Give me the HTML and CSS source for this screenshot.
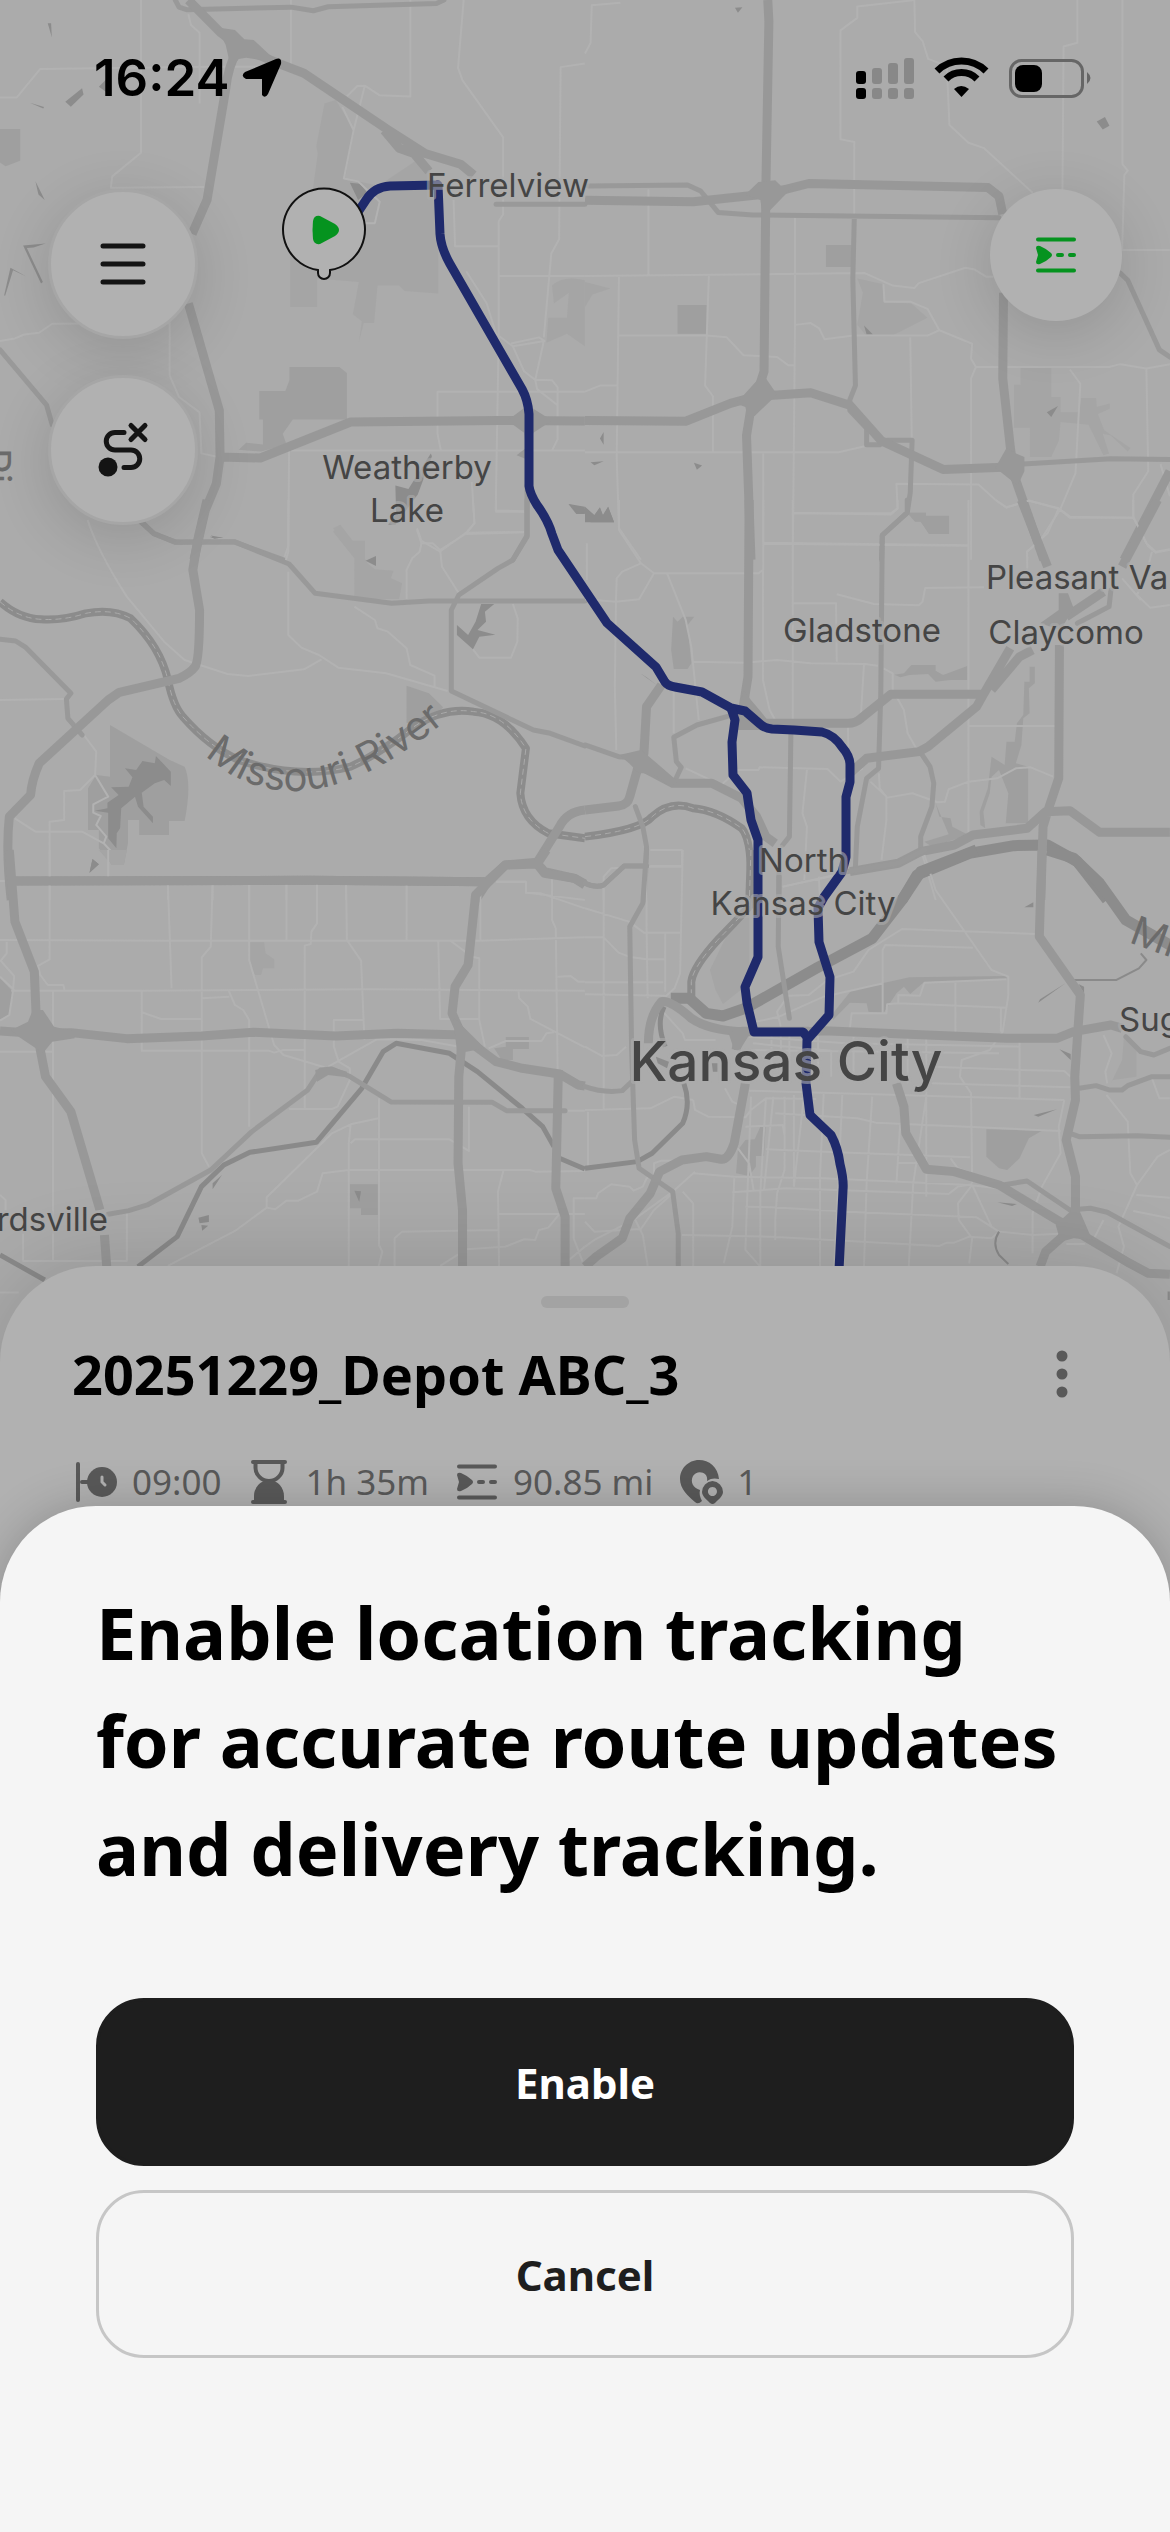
FILE: index.html
```html
<!DOCTYPE html>
<html lang="en">
<head>
<meta charset="utf-8">
<meta name="viewport" content="width=device-width, initial-scale=1">
<title>Route overview</title>
<link rel="stylesheet" href="styles.css">
</head>
<body>
<svg class="defs" aria-hidden="true">
  <symbol id="icon-road" viewBox="0 0 48 48">
    <path d="M6 8.500H42M6 39.500H42M26 24H30M38 24H42" fill="none" stroke="currentColor" stroke-width="4" stroke-linecap="round"/>
    <path d="M4 17Q4 14 8 15Q15 18 19 22Q21 24 19 26Q15 30 8 33Q4 34 4 31L6 24Z" fill="currentColor"/>
  </symbol>
</svg>
<main class="screen">
  <section class="map-area">
    <svg class="map" viewBox="0 0 1170 1380" role="img" aria-label="Route map of Kansas City">
      <!-- north-west -->
      <g class="tile" transform="scale(.373 .357)">
        <path class="park" d="M0 361H54V450L15 466L0 455ZM695 1095H765L776 1065V1028H910L930 1045V1175H785L758 1215L768 1245L700 1265L640 1260L660 1240L705 1245V1175H695Z"/>
        <path class="field" d="M870 290L900 280L950 365L925 500L1015 520L1130 440L1175 520V822L1085 815L1070 800H1012L1003 905H975L962 960L970 900L946 880L962 790L850 780V860H778V700L835 560L852 430L848 410ZM1480 800Q1510 770 1568 785V970L1520 935L1465 960L1470 890H1520L1525 820L1485 850ZM893 1480L912 1470L945 1515H978V1568H955Z"/>
        <path class="lake" d="M128 65H137L139 105ZM175 285L220 247L224 265L190 299ZM80 288L118 300L116 304ZM265 243L285 222V258ZM95 508L120 560L103 545ZM62 688L122 682L90 693L72 695L115 790L110 794ZM28 750L72 775L35 757L14 828H11ZM938 512L965 515L985 540L960 560ZM1060 1360L1095 1370L1155 1270L1158 1278L1120 1385L1060 1470H1040L1062 1440ZM1524 1412L1568 1425V1440H1545ZM565 1500L598 1506L575 1508Z"/>
        <path class="street" d="M378 0V428L301 494L297 526L548 524M0 273H45L108 193L560 187H780V0M505 40L512 70L535 92V290M1100 0V270L1018 267L978 240L958 241L930 270M978 240L948 365L922 500L960 508L1018 565L1005 625H975M918 300L948 365M1243 0L1228 190L1240 225L1349 385V600L1337 620V940L1329 1430L1405 1432M1568 178L1503 188L1499 670L1478 710L1458 945M1216 560L1220 690H1337M1337 773H1568M1250 760L1305 850L1330 935L1375 970L1460 955L1445 945L1370 962M1375 970L1405 1040L1435 1064L1480 1065L1495 1085V1230L1480 1262M1435 1064L1440 1090L1495 1135M1458 955L1435 1064M1568 1097H1173V1215L1182 1262M780 1262H1568M775 1262L773 1530L760 1568M0 955L40 948L65 937L105 932L140 907L455 905V1052L480 1112L535 1155L540 1270L585 1280M1265 1350L1272 1465L1250 1492L1180 1545L1130 1515L1118 1480M1250 1492L1405 1490"/>
        <path class="road" d="M470 0L480 20L500 27L780 20L840 30L880 19L1170 10L1190 0M0 980L125 1135L140 1190M380 1465L412 1495L470 1518H628L760 1568M1413 1360V1500L1375 1568"/>
        <path class="highway" d="M505 0L590 90L640 130L740 175L815 205L1035 360L1140 430L1235 460L1270 490M640 130Q610 190 605 250L555 560L515 655M505 850L588 1150L590 1280L580 1355L550 1430L520 1568M588 1280L698 1283L940 1182L1340 1178L1568 1179M1030 365L1070 415L1110 430L1150 480"/>
        <path class="interchange" d="M580 76L630 84L655 110L680 112L745 175L660 162L640 165L620 195L605 125ZM1360 1178L1415 1135L1480 1178L1430 1212L1420 1260V1290L1385 1275L1410 1255L1405 1212Z"/>
        <path class="road" d="M1330 572H1568"/>
      </g>

      <!-- north-east -->
      <g class="tile" transform="translate(585) scale(.373 .357)">
        <path class="park" d="M646 686H714V748H646ZM248 854H326V935H248ZM864 1436H914V1445H976V1495H922L900 1460H885Z"/>
        <path class="field" d="M730 780L800 796V845L875 850L918 890L820 942H755L730 910L745 820ZM1168 1030H1250V1112H1275V1155H1325L1330 1115H1370L1372 1140L1407 1130V1145L1375 1160L1392 1205L1462 1255L1455 1265L1410 1220L1388 1215L1405 1270L1390 1275L1350 1190L1275 1182L1270 1235L1250 1280H1193V1198H1150V1078H1168ZM0 790L68 808L20 825L0 860Z"/>
        <path class="lake" d="M402 22L422 20L410 36ZM1372 340L1394 328L1406 352L1388 363ZM748 912L772 937H755ZM1238 1155L1268 1137L1250 1168ZM40 1228L50 1210V1246ZM15 1295L50 1292L25 1303ZM292 1296L314 1304L300 1316ZM0 1422L25 1445L40 1422L48 1445L62 1420L78 1463H15L0 1448Z"/>
        <path class="street" d="M0 150L15 120L18 15L95 8M885 0L730 18V50L685 85V390L722 398V600M883 0L885 90L905 115L920 165L970 185L977 350L1028 400L1070 415L1200 540M1320 0V120L1283 130L1280 540M1441 0V460L1455 478L1446 490L1440 700H1568M170 530V770M0 773L750 765L825 800L883 807L895 793L1020 750L1045 755L1075 775H1095M563 610V910L557 1568M563 910L605 905L628 920L642 950L720 940H918L950 925L1038 963L1035 1005L1048 1028M800 796L803 845H872L918 865L950 925M91 773L85 1280L91 1480L150 1568M91 940H326L380 945L425 995L515 1000L545 1023H560M332 773L322 1080L343 1110V1268M0 1097L40 1080H85M0 1267H680L750 1250M872 945L876 1230M1568 1020L1505 1032L1435 1020L1405 1028H1048L1035 1060V1568M1300 1035L1328 1075L1315 1325L1275 1425L1220 1515L1185 1545L1186 1568M1505 1032L1510 1320L1470 1385V1450H1300L1270 1425L1190 1402L1130 1422L1100 1400L1055 1357L835 1355L838 1425L820 1441L560 1437M478 1270V1520L1030 1527M1543 1300L1568 1390M1470 1450L1510 1530L1530 1548L1568 1540"/>
        <path class="road" d="M8 521L275 518L310 535L357 595L450 602L1110 610M722 610L718 780L725 1080L710 1120L710 1150L755 1200V1246H790L810 1233H877L872 1380L864 1436L797 1500L795 1568M1435 765L1455 785L1540 980L1568 1000M1175 1300L1410 1285L1568 1287"/>
        <path class="highway" d="M490 0L493 60L485 520L480 1040L465 1090M0 561L290 565L490 543L600 514L1080 525L1110 550L1120 600M1122 820L1120 1060L1140 1250L1150 1330L1230 1568M0 1178L270 1180L390 1130L460 1110L605 1100L710 1135L795 1235L960 1315L1140 1308M450 1110L433 1220L445 1568M1568 1320L1445 1568"/>
        <path class="interchange" d="M465 510L510 505L525 520H560L495 590H475L470 560L430 545ZM470 1055H482L515 1105L455 1165H435L430 1140L405 1130ZM1130 1255L1155 1270L1178 1280V1320L1160 1360L1100 1310Z"/>
      </g>

      <!-- middle west -->
      <g class="tile" transform="translate(0 500) scale(.373 .3333)">
        <path class="park" d="M295 675L455 780L495 800Q515 850 495 963H453V1005H373V960H343V1030L332 1095H300L265 1045V990H236V865L258 825L295 830ZM1090 557L1150 580L1188 622L1160 655L1090 670Z"/>
        <path class="field" d="M893 95L912 75L945 123H978V175L985 190L1005 208L1055 212L1048 235L1078 250L1070 297H950V175Z"/>
        <path class="lake" d="M418 768L458 815V858L440 840L415 850L380 878L385 920L410 950V970L370 920L362 890L325 925L322 985L313 1000L312 1045L290 1015V938L254 932L288 925V908L318 885L298 862L345 860L355 832L335 805L365 810L382 783L415 790ZM248 1077L265 1093L240 1118ZM1290 312H1325L1300 335L1303 365L1280 390L1328 404L1285 410L1268 448L1225 405V375L1255 405L1275 365ZM1525 12L1568 20V40L1545 35ZM562 110L598 112L575 116ZM980 182L1008 168V198Z"/>
        <path class="street" d="M235 60Q260 150 340 290L440 425L495 480L610 522L665 528L815 508L862 478M773 0V155L765 185M773 215V405L808 443L855 465L907 503L1035 520L1200 573M0 600L175 597M225 705L258 755L255 825L290 890L250 913V938L270 948L258 975L285 1010L278 1030L220 995H95L40 955M255 825L215 870L172 873V960L133 965V1200M278 1030L303 1060L290 1090V1130M1268 0L1272 70L1250 100L1180 150L1160 130H1130L1118 90M1250 102L1405 97M1130 130L1125 155L1105 175L1090 210V297M1180 150L1185 200L1230 280M1330 0V35H1405M1375 312L1388 355L1387 425L1370 473H1285L1268 448M950 320L1005 360L1012 385L1040 395L1090 445L1100 495L1165 527V560M450 1145V1200M570 1145V1200M668 1145V1200M768 1145V1200M850 1145V1200M928 1145V1200M1090 1145V1200M1330 1145H1410V1178L1568 1200M1480 1130V1200M0 1143H30"/>
        <path class="river" d="M0 305Q50 355 110 358Q170 362 230 340Q300 325 350 355Q430 440 450 540Q465 620 490 650Q560 740 640 780Q800 840 940 800Q1020 760 1110 680Q1190 620 1270 635Q1350 640 1410 745L1395 880Q1400 960 1470 1000L1568 1015"/>
        <path class="channel" d="M0 305Q50 355 110 358Q170 362 230 340Q300 325 350 355Q430 440 450 540Q465 620 490 650Q560 740 640 780Q800 840 940 800Q1020 760 1110 680Q1190 620 1270 635Q1350 640 1410 745L1395 880Q1400 960 1470 1000L1568 1015"/>
        <path class="road" d="M380 65L412 100L470 127L628 125L775 192L845 280L1050 310L1150 303H1568M1413 0V110L1375 180L1335 205L1230 285L1210 330V573L1430 690L1475 700L1568 738M0 418L42 423L70 443L190 580L178 597L182 655L220 705"/>
        <path class="highway" d="M555 0L530 120L517 210L535 330Q535 480 523 500Q510 520 480 535L320 577L290 600L105 790Q85 840 82 885L25 950Q15 1050 30 1200M30 1143L830 1141L1300 1145M1275 1200L1310 1140L1355 1095L1440 1087L1500 980Q1520 935 1568 930M1440 1090L1460 1115L1540 1135L1568 1152"/>
      </g>

      <!-- middle east -->
      <g class="tile" transform="translate(585 500) scale(.373 .3333)">
        <path class="park" d="M236 350L248 365L262 350H293L275 375L285 490L275 507H238L231 450ZM864 38H914V48H976V101H922L900 65H885ZM830 524L855 520L875 495H940V512L960 525L1025 498V540H980L940 545L920 522L870 525L845 532ZM1192 500H1206V550L1190 565L1192 640L1175 655L1170 735L1155 790L1188 800V970H1128L1135 880L1110 810L1090 830L1085 880L1068 935L1073 985L1060 975L1058 935L1080 865L1090 770L1125 795L1130 725H1152L1158 670L1175 645L1178 545H1192ZM940 910L950 950L980 955L985 980L1028 1005L930 1040L910 1025L975 1003Z"/>
        <path class="lake" d="M0 20L25 45L40 22L48 45L62 20L78 67H0ZM148 520L165 532L192 555Z"/>
        <path class="street" d="M91 0V90L150 190L185 220H465L477 210V540L495 630L510 660M478 0V210M557 0V660M557 40H820L838 25V0M478 131L1028 137V0M1028 137V1000M150 190L100 215L85 235L83 303M0 298L83 305L145 298L185 220M83 303L80 560L84 750M220 220L270 360L285 440L305 660M238 560V700M290 485L430 488L515 480L605 490L750 492L785 497M557 310H673L675 485M675 283L775 312L895 316L905 305L912 264L1070 262M748 492L740 640M800 505L825 520V570L855 630L865 700L888 745M1030 678H1260M705 680L706 745M270 805L365 855L410 810H465L468 802L650 807L685 845L745 805M595 810L583 940L595 980L588 1140M765 845L808 890V960L795 1080M788 820L790 865L810 893L878 880L945 907L965 905L975 868L1028 845L1105 835L1155 805L1195 802L1255 830M1100 0L1130 22L1190 2L1270 25L1300 50L1470 53V0M1270 25L1240 100L1185 155L1186 220M1470 50L1505 130L1530 155L1568 148M1520 155L1505 220L1480 285L1515 323L1568 315M1440 235L1490 300M5 130V240M50 1200V1130L70 1105L165 1100H260V1050H175M530 1160L700 1120M627 1130L630 1200M905 1065L940 1200"/>
        <path class="river" d="M0 1010Q150 990 180 950Q230 900 290 925Q350 930 420 985Q450 1020 445 1200"/>
        <path class="channel" d="M0 1010Q150 990 180 950Q230 900 290 925Q350 930 420 985Q450 1020 445 1200"/>
        <path class="river wide" d="M850 1200L890 1125L1030 1060L1150 1037L1240 1035L1320 1085L1400 1200"/>
        <path class="road" d="M864 0V38L797 105L793 580L787 805L755 835L730 980L725 1100M0 735L90 770L150 775M380 650L300 675L238 712L245 785L258 802L238 850M552 700L548 1010L530 1035M1410 270L1405 320L1320 370M520 1120V1200M135 920L155 980L165 1040L160 1200M165 1098H105L50 1155Q30 1165 0 1150M895 750L925 800L935 850L930 920L900 1010V1050"/>
        <path class="highway" d="M440 0L437 530L420 650M1170 0L1240 200M1535 0L1440 200M1390 275L1290 350M1140 445L1070 580L1050 620L920 740L895 755L755 775L710 820M1200 450L1165 470L1090 570M1065 583H820L740 655Q725 670 705 670H420M1272 435L1270 835L1240 935L1228 980L1222 1200M1568 997H1380L1300 932L1235 935L1185 985L1040 1005L990 1035L900 1055L840 1090L710 1115M205 555L165 620L158 760L140 810L120 890Q115 915 90 918L0 930M150 800L235 850H340L420 895L460 950L485 1010L510 1030"/>
        <path class="interchange" d="M1270 280H1295L1310 325L1275 390L1220 370L1270 330ZM92 765L150 750L172 770L250 845L230 860L180 820H145L118 790ZM425 570L445 600L475 640L510 690H410V640Z"/>
      </g>

      <!-- south-west -->
      <g class="tile" transform="translate(0 850) scale(.373 .3333)">
        <path class="park" d="M938 1003H1013V1095H968V1075H938ZM1356 561H1418V597H1375V630H1345L1325 595L1356 590ZM0 385L35 425L25 495L0 508Z"/>
        <path class="field" d="M670 277H708L712 310L735 328V355H705L700 375H684L670 345ZM265 0H340L332 45H300Z"/>
        <path class="lake" d="M248 27L265 43L240 68ZM950 1022L968 1024L963 1055ZM532 1103L560 1095V1116L535 1120ZM540 1125L558 1127L542 1142ZM595 975L570 1018V1000Z"/>
        <path class="street" d="M133 0V328L102 348L108 375L128 405H170L173 420M290 0V82M0 270L450 272H1285L1568 262M450 100L460 415M570 100L565 290L541 322V910L560 950M668 100V330L690 415L735 585L760 615L870 652M768 100V270M850 100V220L835 245L833 282L817 287V775M928 100L930 270L968 332L977 570M1090 100V270M1288 130V270M30 422H380L1000 418L1568 422M0 330L38 378L35 422L25 495L0 512M0 380L38 420M18 275V310L0 335M142 425V1230M380 425V602H720L735 608L760 600H815M380 487L432 507H540M541 445L615 440M613 422L630 465L652 480L668 510V830M975 510H895V590L908 635L938 655V690L905 770L890 777H775M880 650L1010 568L1130 570L1280 600M1175 275L1180 507H1285V325L1265 320L1205 270M1285 510L1300 590M1390 422L1392 445L1415 470L1422 507L1568 592M1485 547L1465 550L1452 573H1356L1310 595M1480 80V210L1490 235L1495 660M1495 380L1530 378L1550 395H1568M0 605H142M1330 95H1410V128L1450 130L1568 175M1015 805L940 823L890 850L715 1042V1073L630 1143L450 1248M715 1073L738 1078L768 1052H800L850 1025L865 970L935 960H1420L1435 965L1568 963M935 1250V880L940 823M1016 745V1185L1025 1205L1015 1248M940 880L952 868H1205L1257 903V770M1350 960L1335 1025L1338 1248M1336 1092H1568M1058 1248V1165L1078 1145L1336 1140M1180 1248L1250 1198L1355 1190L1405 1168L1435 1170L1445 1140L1470 1133L1500 1092M1568 1045H1538V1165L1562 1235M1515 1240L1568 1190M1520 782H1568M62 1150V1233H340V1090M0 1035L15 1050V1080M0 1328H50"/>
        <path class="water-line" d="M370 1250L475 1160L540 1010L600 945L670 907L848 877L970 715L1027 605L1062 580L1205 610L1280 665L1400 775L1455 830L1485 890M1500 925L1568 957M0 1215L120 1290"/>
        <path class="road" d="M290 1093L345 1082L395 1065L565 960L675 845L825 720L860 660L890 657L935 678L1048 756L1320 757L1358 782H1515"/>
        <path class="highway" d="M25 0L40 215L92 365L97 500L108 600L122 680L190 785L268 1080M280 1155L286 1250M0 543L90 550L190 548L340 566L540 558L680 547L900 558L1065 550L1240 555M30 93L830 91L1300 95M1465 0L1440 42L1355 45L1275 135L1255 345L1220 410L1212 490L1240 560L1230 680L1228 940L1240 1080V1250M1240 560L1330 635L1400 655L1500 672L1550 705L1568 708M1497 660L1490 1015L1515 1100V1250M1440 42L1460 70L1540 85L1568 105"/>
        <path class="interchange" d="M88 480H115L145 530L200 545V565L140 575L115 610L90 590L50 560L30 540L75 515ZM1215 500L1300 595L1250 605H1225ZM845 660L885 650L930 665V682L880 675L850 695Z"/>
      </g>

      <!-- south-east -->
      <g class="tile" transform="translate(585 850) scale(.373 .3333)">
        <path class="park" d="M665 490L715 420L870 382L1130 378V388L935 395L905 400L872 432L855 410L835 430L800 490L760 485L755 460L710 458L665 510ZM1076 838L1225 842L1190 865L1165 925L1132 960L1110 955L1076 920ZM470 830H484L480 918H458V950L440 978L405 970L410 900L430 870L455 868Z"/>
        <path class="field" d="M440 190V400L370 462L350 420L335 360L400 210ZM1445 560L1478 600V680L1415 690L1410 700L1440 630Z"/>
        <path class="lake" d="M1178 172L1202 157V172ZM1288 400L1215 458L1220 448ZM1323 402L1338 410V430ZM1272 598L1302 612V630ZM1203 795L1265 778L1215 800ZM1105 1057L1158 1062L1145 1068ZM1562 1325H1568V1350H1562ZM340 640H355V665H343ZM190 620L225 635L220 655L195 640Z"/>
        <path class="street" d="M50 115V780M165 0V230L168 445M0 175L118 215L158 248H255M262 0L255 370L240 415L215 440M215 250V425M0 262H50L90 308L118 320L165 328H215M0 397H210M0 433L215 437M0 780L175 775L240 740L290 750M8 785V955M0 590L45 618L85 615L110 590M175 48H262M910 15L940 120L1090 360L1135 380V435L1120 545L1085 600L1010 630L1005 680L1035 730L1038 1000M530 110L690 70M1210 252L850 237L760 300L720 365L650 390L600 435L545 437L515 485L525 530M1040 293L805 285L798 300V490M1130 388L910 398L898 437L840 435V460L810 463L808 490H715L710 535M840 460L1130 473M993 398V550M1115 475V545M440 520L520 500L640 440L800 400M435 540L800 545M440 560L700 580L1165 590M450 580L660 602M445 600L1110 610M500 540V650M525 540V655M548 540V660M625 540V660M660 600V680M865 560V700M915 560V1040M1165 575V745M720 560V690M930 650L1170 660L1285 663L1302 680M930 700L1302 712M440 722L1285 750M510 790L730 805L780 818L1275 843M485 898L640 905L1032 922M400 980L640 985L1030 1005L1150 1020M395 1027L540 1015L975 1032L1000 1010L1038 1003M430 1070L500 1072L735 1087L1050 1102L1110 1145M260 1155L500 1160L950 1188L970 1178H990L1030 1160L1090 1165L1110 1145L1200 1155L1330 1148M400 985L395 1130L372 1240M445 740L440 900L435 1040L430 1200L468 1248M485 745L470 1030L470 1248M505 740L480 1020M535 740V960L515 1030L510 1110V1170M560 735V1010M587 740L560 1010M640 730L630 980V1248M690 730L680 980L668 1248M770 740L755 1000L748 1248M845 820L835 1000M915 740L880 1000L868 1248M840 938L910 940M980 925L1000 955L1035 970M1038 1005L1000 1060L1002 1110L1038 1165L1030 1240M1038 1005L1090 1130M1285 750L1270 830L1275 910L1225 1010L1200 1090V1210M1398 735L1455 815L1462 970L1480 1005L1430 1130L1445 1190L1425 1270M1480 1005L1535 920L1568 900M1390 555L1412 610L1395 665L1400 700M1478 1035L1568 1043M1470 1083L1568 1105M1520 685L1540 745H1568M205 480L262 550L268 570H350M290 750L295 780L330 800L430 802L445 780L485 745L620 747M430 830L530 825L535 855M375 715L395 755L425 770M295 965L235 1025L130 1110L25 1170L0 1190M135 1110L155 1155L168 1248M0 1115L25 1145L150 1137L185 1080L240 1025M0 1045L30 1045L35 1030L70 1003L120 1010L130 1022L155 1010L165 985L180 975M262 1025L290 1060V1248M290 970L400 980M185 975V940L205 932H260M410 895L440 940L452 1020M1290 1182H1340M1365 1165L1390 1110"/>
        <path class="river" d="M445 0L440 170Q400 220 360 265Q290 350 285 395L285 460"/>
        <path class="channel" d="M445 0L440 170Q400 220 360 265Q290 350 285 395L285 460"/>
        <path class="river wide" d="M230 445L280 445L325 490L370 498L430 475L620 355L770 265L850 150L900 65L1050 0M1240 0L1310 25L1380 100L1450 210L1568 285"/>
        <path class="water-line thin" d="M1310 390H1425L1485 355L1505 330L1490 310M1110 1145Q1090 1180 1110 1215L1135 1242"/>
        <path class="water-line" d="M212 470Q190 520 215 590M265 700Q285 760 262 820L180 910L140 935L0 955"/>
        <path class="road" d="M165 0L155 160L120 230L125 600L133 870L145 955L235 1025L250 1150V1250M0 710Q50 730 100 722L130 690M520 80L518 290L548 505M165 48H105L50 105Q30 115 0 100M1325 715L1370 707L1405 720H1440L1455 707L1520 680H1568M1300 850L1325 860L1480 857L1568 862M1450 560L1490 605L1525 615L1568 595M1120 1005L1185 993L1300 1080L1355 1075L1400 1087L1568 1190M700 65L840 40L910 0"/>
        <path class="highway" d="M170 580Q170 500 205 455Q230 450 285 505Q330 540 420 545L450 545M600 545L640 542L1130 565H1265L1310 545L1410 525L1440 535M415 545L405 600M430 700L400 880Q385 930 365 928L325 920L260 930L200 965L175 1030L120 1105L100 1165L30 1220L0 1250M1225 0L1218 260L1328 435L1313 680L1315 750L1290 870L1315 980V1090M835 700L855 770L860 850L915 958L990 965L1110 1005L1265 1110L1310 1140L1460 1240L1510 1270L1568 1273M1290 1150L1235 1205L1220 1250"/>
        <path class="interchange" d="M1305 1080H1325L1360 1170L1310 1165L1275 1175L1262 1125ZM385 550L420 530H600V555L440 555L415 600H400Z"/>
      </g>

      <g class="route">
        <path d="M356 215L366 200Q374 187 390 186L438 185L440 234Q441 248 450 264L522 389Q528 400 529 414V486Q530 494 537 505Q548 520 552 534L558 550L607 623L656 667L665 682Q668 686 675 687L702 692L731 708L745 711L760 724Q764 728 772 729L794 730L822 732Q834 735 842 747Q850 756 850 765V782L846 797V857L842 872L824 897L818 908L819 942L830 977L829 1015L807 1040L806 1083L810 1115L831 1135Q838 1148 840 1164Q844 1180 843 1190L839 1270"/>
        <path d="M731 708L735 720L732 742L733 775L747 793L751 820L758 840V957L745 987L747 1003L754 1032L803 1032L808 1038"/>
      </g>

      <g class="labels">
        <text x="508" y="197" text-anchor="middle">Ferrelview</text>
        <text x="407" y="479" text-anchor="middle">Weatherby</text>
        <text x="407" y="522" text-anchor="middle">Lake</text>
        <text x="862" y="642" text-anchor="middle">Gladstone</text>
        <text x="986" y="589">Pleasant Val</text>
        <text x="1066" y="644" text-anchor="middle">Claycomo</text>
        <text x="803" y="872" text-anchor="middle">North</text>
        <text x="803" y="915" text-anchor="middle">Kansas City</text>
        <text class="city" x="786" y="1081" text-anchor="middle">Kansas City</text>
        <text x="1119" y="1031">Sug</text>
        <text x="108" y="1231" text-anchor="end">rdsville</text>
        <path id="river-bend" d="M205 755Q298 840 442 724" fill="none"/>
        <text class="water"><textPath href="#river-bend">Missouri River</textPath></text>
        <text class="water" transform="translate(1128 942) rotate(20)">Mi</text>
        <text class="water" transform="translate(-18 448) rotate(90)">Ri</text>
      </g>

      <path d="M318 270A41 41 0 1 1 330 270V273A6 6 0 0 1 318 273Z" fill="#b1b1b1" stroke="#111" stroke-width="2"/>
      <path d="M313 221Q314 215 320 216L335 224Q343 230 335 236L320 244Q314 245 313 239Q312 230 313 221Z" fill="#05931f"/>
    </svg>

    <div class="overlay">
      <header class="status">
        <span class="clock">16:24</span>
        <svg class="arrow" viewBox="0 0 40 40" aria-hidden="true"><path d="M34 1Q40-1 39 6L26 36Q23 41 20 37V21H4Q-2 18 3 14Z"/></svg>
        <svg class="phone-state" viewBox="0 0 236 42" width="236" height="42" aria-hidden="true">
          <g fill="#888"><rect x="16" y="11" width="10" height="16" rx="3"/><rect x="32" y="6" width="10" height="21" rx="3"/><rect x="48" y="1" width="10" height="26" rx="3"/><rect x="16" y="31" width="10" height="11" rx="3"/><rect x="32" y="31" width="10" height="11" rx="3"/><rect x="48" y="31" width="10" height="11" rx="3"/></g>
          <rect y="14" width="10" height="13" rx="3"/><rect y="31" width="10" height="11" rx="3"/>
          <path d="M81 14A35 35 0 0 1 130 14M90 22A22 22 0 0 1 121 22" fill="none" stroke="#000" stroke-width="7"/>
          <path d="M98 32Q105 26 113 32L105.500 40Z"/>
          <rect x="154.500" y="3.500" width="72" height="36" rx="11" fill="none" stroke="#666" stroke-width="3"/>
          <path d="M231 15Q238 21 231 27Z" fill="#666"/>
          <rect x="159" y="8" width="27" height="27" rx="8"/>
        </svg>
      </header>
      <div class="controls">
        <div class="stack">
          <button class="round" aria-label="Menu"><svg viewBox="0 0 72 72" aria-hidden="true"><path d="M16 18H56M16 36H56M16 54H56" fill="none" stroke="#141414" stroke-width="5" stroke-linecap="round"/></svg></button>
          <button class="round" aria-label="Clear route"><svg viewBox="0 0 72 72" aria-hidden="true"><path d="M37 18.500H28A8.700 8.700 0 0 0 28 36H44A8.700 8.700 0 0 1 44 53.500H37M44 11.500L58 25.500M58 11.500L44 25.500" fill="none" stroke="#141414" stroke-width="5" stroke-linecap="round"/><circle cx="21" cy="53" r="9.500" fill="#141414"/></svg></button>
        </div>
        <button class="round small" aria-label="Route list"><svg aria-hidden="true"><use href="#icon-road"/></svg></button>
      </div>
    </div>
  </section>

  <section class="sheet">
    <div class="handle"></div>
    <div class="title-row">
      <h2>20251229_Depot ABC_3</h2>
      <button class="more" aria-label="More options"><svg viewBox="0 0 48 48" aria-hidden="true"><circle cx="24" cy="6" r="5.500"/><circle cx="24" cy="24" r="5.500"/><circle cx="24" cy="42" r="5.500"/></svg></button>
    </div>
    <ul class="facts">
      <li><svg viewBox="0 0 48 48" aria-hidden="true"><path d="M6 6V42M10 24H20" stroke="currentColor" stroke-width="4" stroke-linecap="round"/><circle cx="30" cy="24" r="15" fill="currentColor"/><path d="M30 19V24L33 27" fill="none" stroke="#b1b1b1" stroke-width="3" stroke-linecap="round"/></svg>09:00</li>
      <li><svg viewBox="0 0 48 48" aria-hidden="true"><path d="M8 4H40M8 44H40" stroke="currentColor" stroke-width="4" stroke-linecap="round"/><path d="M10.500 5V10C10.500 17 17 23 24 23S37.500 17 37.500 10V5" fill="none" stroke="currentColor" stroke-width="4"/><path d="M9 44V38C9 30 15 22 24 22S39 30 39 38V44Z" fill="currentColor"/></svg>1h 35m</li>
      <li><svg aria-hidden="true"><use href="#icon-road"/></svg>90.85 mi</li>
      <li><svg viewBox="0 0 48 48" aria-hidden="true"><path d="M22 2C11 2 3 11 3 21C3 31 11 38 18 44Q21 47 25 43C23 39 22 36 23 32C16 30 13 24 16 18C20 11 32 14 30 23C34 20 38 20 42 21C41 9 32 2 22 2Z" fill="currentColor"/><path fill-rule="evenodd" d="M35.500 23A11 11 0 0 0 25 34C25 38 30 42 33 45Q35.500 47 38 45C41 42 46 38 46 34A11 11 0 0 0 35.500 23ZM35.500 29A4.500 4.500 0 1 1 35.400 29Z" fill="currentColor"/></svg>1</li>
    </ul>
  </section>

  <section class="modal" role="dialog" aria-labelledby="modal-title">
    <h1 id="modal-title">Enable location tracking for accurate route updates and delivery tracking.</h1>
    <div class="actions">
      <button class="primary">Enable</button>
      <button class="secondary">Cancel</button>
    </div>
  </section>
</main>
</body>
</html>
```

FILE: styles.css
```css
* { box-sizing: border-box; }
body {
  margin: 0;
  background: #f5f5f5;
  color: #000;
  font-family: "Noto Sans", sans-serif;
}
h1, h2, ul { margin: 0; padding: 0; }
button { font: inherit; cursor: pointer; }
.defs { position: absolute; width: 0; height: 0; }
.screen {
  display: flex;
  flex-direction: column;
  min-height: 100vh;
  overflow: hidden;
}

/* map */
.map-area { display: grid; background: #ababab; }
.map-area > * { grid-area: 1 / 1; }
.map { display: block; width: 100%; }
.tile path { vector-effect: non-scaling-stroke; stroke-linejoin: round; }
.park { fill: #9f9f9f; }
.field { fill: #a5a5a5; }
.lake { fill: #8c8c8c; }
.street { fill: none; stroke: #b2b2b2; stroke-width: 2px; }
.road { fill: none; stroke: #999; stroke-width: 5px; stroke-linecap: round; }
.highway { fill: none; stroke: #989898; stroke-width: 9px; }
.interchange { fill: #989898; }
.river { fill: none; stroke: #8c8c8c; stroke-width: 8px; }
.river.wide { stroke-width: 11px; }
.channel { fill: none; stroke: #aaa; stroke-width: 1px; stroke-dasharray: 6 4; }
.water-line { fill: none; stroke: #8a8a8a; stroke-width: 5px; }
.water-line.thin { stroke-width: 2px; }
.route { fill: none; stroke: #1f2a6c; stroke-width: 9px; stroke-linejoin: round; }
.labels {
  font: 33px Inter, sans-serif;
  fill: #454545;
  stroke: rgba(171, 171, 171, 0.6);
  stroke-width: 6px;
  stroke-linejoin: round;
  paint-order: stroke;
}
.labels path { stroke: none; }
.labels .city { font-size: 55px; font-weight: 500; }
.labels .water { font-size: 40px; fill: #6b6b6b; stroke: none; }

/* status bar and floating controls */
.overlay { z-index: 1; }
.status {
  display: flex;
  align-items: center;
  height: 48px;
  margin-top: 54px;
  padding: 0 78px 0 94px;
}
.clock { font: 600 51px/48px Inter, sans-serif; }
.arrow { width: 40px; height: 40px; margin-left: 13px; }
.phone-state { margin-left: auto; }
.controls {
  display: flex;
  justify-content: space-between;
  align-items: flex-start;
  padding: 87px 48px 0;
}
.stack { display: grid; gap: 36px; }
.round {
  display: grid;
  place-items: center;
  width: 150px;
  height: 150px;
  padding: 0;
  border: 3px solid #a6a6a6;
  border-radius: 50%;
  background: #b1b1b1;
  box-shadow: 0 12px 60px rgba(0, 0, 0, 0.14);
}
.round svg { width: 72px; height: 72px; }
.round.small {
  width: 132px;
  height: 132px;
  border: 0;
  color: #05931f;
}
.round.small svg { width: 48px; height: 48px; }

/* route sheet */
.sheet {
  z-index: 2;
  margin-top: -114px;
  padding: 30px 72px 96px;
  border-radius: 96px 96px 0 0;
  background: #b1b1b1;
  box-shadow: 0 0 90px rgba(0, 0, 0, 0.16);
}
.handle {
  width: 88px;
  height: 12px;
  margin: 0 auto;
  border-radius: 6px;
  background: #a3a3a3;
}
.title-row {
  display: flex;
  justify-content: space-between;
  align-items: center;
  margin-top: 30px;
}
h2 { font-size: 54px; line-height: 72px; font-weight: 700; }
.more {
  display: grid;
  padding: 0;
  border: 0;
  background: none;
  margin-right: 12px;
}
.more svg { width: 48px; height: 48px; fill: #595959; }
.facts {
  display: flex;
  gap: 24px;
  margin-top: 48px;
  list-style: none;
  font-size: 35px;
  line-height: 48px;
  color: #595959;
}
.facts li { display: flex; gap: 12px; }
.facts svg { width: 48px; height: 48px; }

/* permission dialog */
.modal {
  z-index: 3;
  flex: 1;
  margin-top: -96px;
  padding: 72px 96px 168px;
  border-radius: 96px 96px 0 0;
  background: #f5f5f5;
  box-shadow: 0 0 48px rgba(0, 0, 0, 0.2);
}
h1 { font-size: 72px; line-height: 108px; font-weight: 700; }
.actions { display: grid; gap: 24px; margin-top: 96px; }
.actions button {
  height: 168px;
  border: 3px solid #1e1e1e;
  border-radius: 48px;
  font-size: 42px;
  font-weight: 700;
}
.primary { background: #1e1e1e; color: #fff; }
.actions .secondary { background: #f5f5f5; border-color: #c6c6c6; color: #1e1e1e; }
```
